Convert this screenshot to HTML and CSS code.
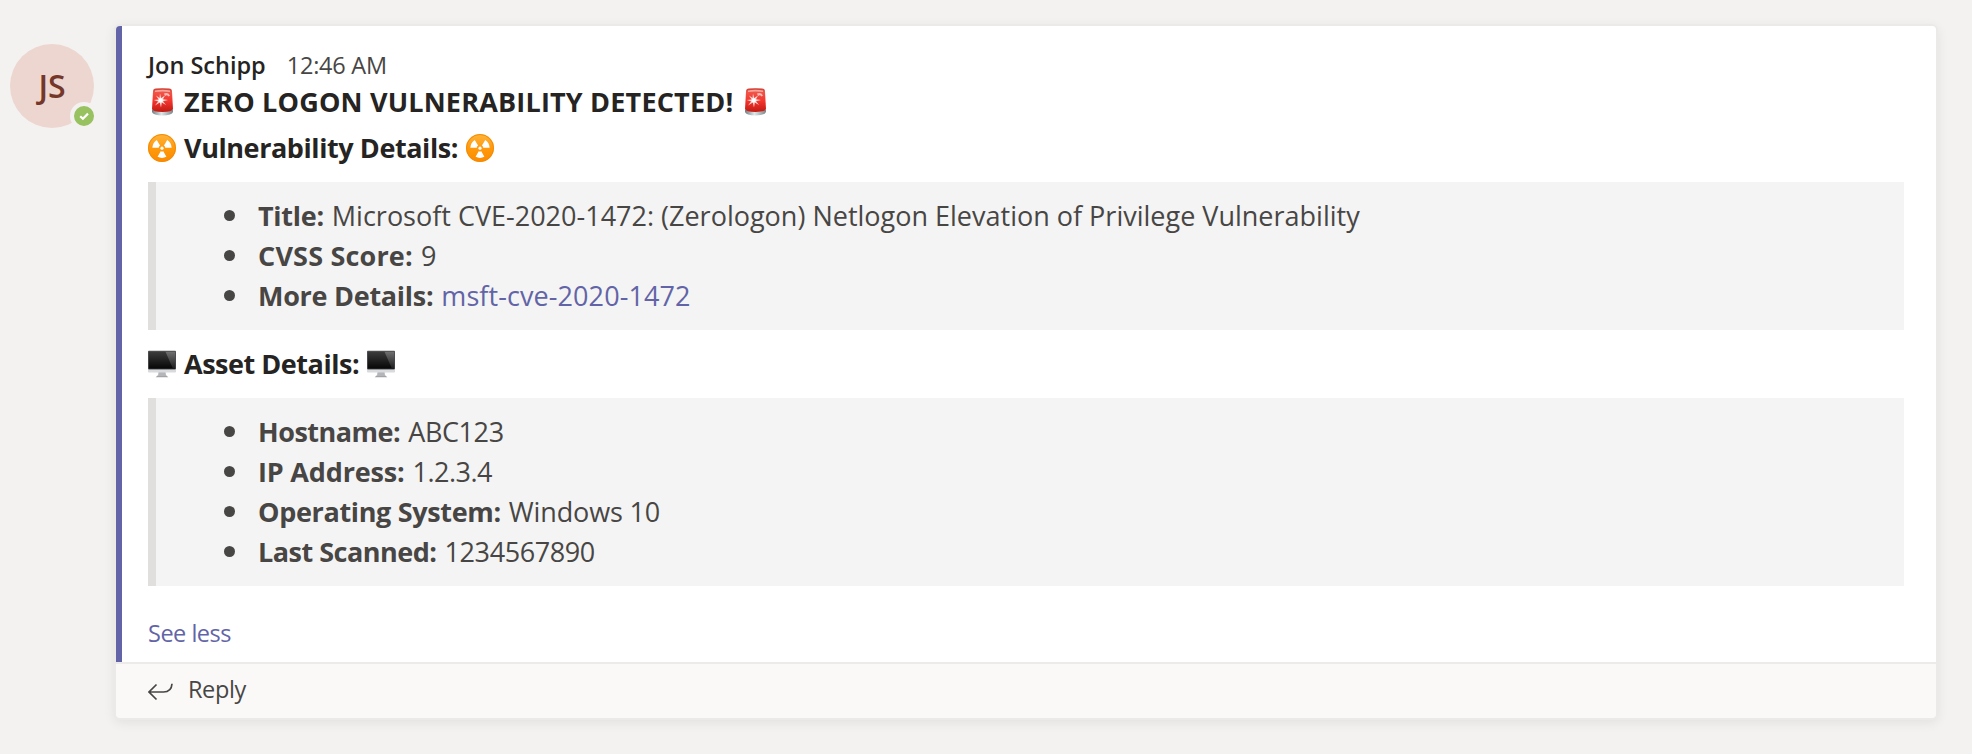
FILE: index.html
```html
<!DOCTYPE html>
<html lang="en">
<head>
<meta charset="utf-8">
<title>Conversation</title>
<link rel="stylesheet" href="styles.css">
</head>
<body>
<svg class="defs" width="0" height="0">
  <defs>
    <linearGradient id="red" x1="0" y1="0" x2="0" y2="1"><stop offset="0" stop-color="#c9382c"/><stop offset=".15" stop-color="#f0564a"/><stop offset=".55" stop-color="#f2352d"/><stop offset="1" stop-color="#c01a12"/></linearGradient>
    <linearGradient id="base" x1="0" y1="0" x2="1" y2="0"><stop offset="0" stop-color="#6f7c80"/><stop offset=".45" stop-color="#dfe6e8"/><stop offset="1" stop-color="#7b878b"/></linearGradient>
    <linearGradient id="orange" x1="0" y1="0" x2="0" y2="1"><stop offset="0" stop-color="#ffb43c"/><stop offset=".5" stop-color="#ff9a0c"/><stop offset="1" stop-color="#fb8a00"/></linearGradient>
    <linearGradient id="screen" x1="0" y1="0" x2="0" y2="1"><stop offset="0" stop-color="#3c3c3c"/><stop offset="1" stop-color="#060606"/></linearGradient>
    <linearGradient id="glare" x1="0" y1="0" x2="0" y2="1"><stop offset="0" stop-color="#707070"/><stop offset="1" stop-color="#1c1c1c"/></linearGradient>
    <symbol id="siren" viewBox="0 0 28 28">
      <path d="M4 21.5 L25 21.5 L25 24 Q24 27.4 14.5 27.4 Q5 27.4 4 24Z" fill="url(#base)"/>
      <path d="M5 3.4 Q5 .5 8 .4 Q14.500 -.1 21 .4 Q24 .5 24 3.400 L25 21 Q24 24 14.500 24 Q5 24 4 21Z" fill="url(#red)"/>
      <path d="M7 2.600 Q14.500 1 22 2.600 L22 4 Q14.500 3 7 4Z" fill="#f9a59c"/>
      <path d="M16 5.500 Q20 4 22 7.500 L20.500 8.500 Q19 6.500 17 8Z" fill="#ffd0ca" opacity=".85"/>
      <path d="M12 5.500 L13.200 10 L17 7.500 L15 11.300 L20 11.900 L15 13.200 L18 17 L13.800 14.500 L13 19.500 L11.800 14.500 L7 17.500 L10.200 13.400 L5.800 12 L10.600 11.400 L8 7.500 L11.500 10Z" fill="#ffd9d4"/>
      <circle cx="12.700" cy="12.400" r="2.100" fill="#fff"/>
    </symbol>
    <symbol id="radiation" viewBox="0 0 28 28">
      <circle cx="14" cy="14" r="14" fill="url(#orange)"/>
      <circle cx="14" cy="14" r="13.500" fill="none" stroke="#f28c0a" stroke-width="1"/>
      <g fill="#fff">
        <circle cx="14" cy="14.200" r="1.600"/>
        <path id="blade" d="M12.700 17.200 Q14 17.900 15.300 17.200 L18.400 22.800 Q14 25 9.600 22.800Z"/>
        <use href="#blade" transform="rotate(120 14 14.200)"/>
        <use href="#blade" transform="rotate(240 14 14.200)"/>
      </g>
    </symbol>
    <symbol id="monitor" viewBox="0 0 28 28">
      <g transform="translate(0 .8)">
        <path d="M10.500 21 H17.500 L18 25 H10Z" fill="#b4b5b9"/>
        <path d="M9.500 24.600 H18.500 L20.300 26.400 H7.700Z" fill="#a2a3a6"/>
        <rect x="0" y="17" width="28" height="4.700" rx=".8" fill="#d9dade"/>
        <rect x="0" y="0" width="28" height="18.600" rx=".8" fill="#505154"/>
        <rect x=".8" y=".9" width="26.400" height="17" fill="url(#screen)"/>
        <path d="M17.500 .9 H27.200 V17.900 H25Z" fill="url(#glare)"/>
      </g>
    </symbol>
  </defs>
</svg>
<main class="thread">
  <div class="avatar">JS
    <span class="presence"><svg viewBox="0 0 20 20"><path d="M6.200 10.200 L8.900 12.700 L14 7.600" fill="none" stroke="#fff" stroke-width="2.200"/></svg></span>
  </div>
  <article class="card">
    <section class="message">
      <header class="meta"><span class="author">Jon Schipp</span><time class="time">12:46 AM</time></header>
      <h1 class="heading alert"><svg class="emoji"><use href="#siren"/></svg><span>ZERO LOGON VULNERABILITY DETECTED!</span><svg class="emoji"><use href="#siren"/></svg></h1>
      <h2 class="heading"><svg class="emoji"><use href="#radiation"/></svg><span>Vulnerability Details:</span><svg class="emoji"><use href="#radiation"/></svg></h2>
      <ul class="quote">
        <li><b>Title:</b><span class="wide">Microsoft CVE-2020-1472: (Zerologon) Netlogon Elevation of Privilege Vulnerability</span></li>
        <li><b class="caps">CVSS Score:</b><span>9</span></li>
        <li><b>More Details:</b><a class="link wider">msft-cve-2020-1472</a></li>
      </ul>
      <h2 class="heading asset"><svg class="emoji"><use href="#monitor"/></svg><span>Asset Details:</span><svg class="emoji"><use href="#monitor"/></svg></h2>
      <ul class="quote">
        <li><b class="tight">Hostname:</b><span>ABC123</span></li>
        <li><b class="address">IP Address:</b><span class="tight">1.2.3.4</span></li>
        <li><b class="system">Operating System:</b><span class="windows">Windows 10</span></li>
        <li><b class="tight">Last Scanned:</b><span>1234567890</span></li>
      </ul>
      <a class="toggle link">See less</a>
    </section>
    <footer class="reply">
      <svg class="reply-icon" viewBox="0 0 26 18"><path d="M8.500 1.500 L1 9 L8.500 16.500 M1 9 H15.500 Q23.500 9 24 .8" fill="none" stroke="#484644" stroke-width="1.700"/></svg>
      <span>Reply</span>
    </footer>
  </article>
</main>
</body>
</html>
```
FILE: styles.css
```css
* { box-sizing: border-box; }
body {
  margin: 0;
  background: #f3f2f1;
  color: #484644;
  font-family: "Open Sans", "Noto Sans", sans-serif;
}
.defs { display: block; }
.thread {
  display: flex;
  align-items: flex-start;
  gap: 22px;
  height: 754px;
  padding: 26px 36px 36px 10px;
}
.avatar {
  position: relative;
  flex: none;
  width: 84px;
  height: 84px;
  margin-top: 18px;
  border-radius: 50%;
  background: #edd6cf;
  color: #74372a;
  font-size: 32px;
  font-weight: 600;
  line-height: 83px;
  text-align: center;
}
.presence {
  position: absolute;
  right: -4px;
  bottom: -2px;
  width: 28px;
  height: 28px;
  border: 4px solid #f3f2f1;
  border-radius: 50%;
  background: #98c160;
}
.presence svg { display: block; }
.card {
  flex: 1;
  border-radius: 4px;
  box-shadow: 0 0 0 2px #ebeae8, 0 3px 12px 2px rgba(0, 0, 0, .07);
}
.message {
  height: 636px;
  padding: 23px 32px 0 26px;
  border-left: 6px solid #6264a7;
  border-radius: 4px 4px 0 0;
  background: #fff;
}
.meta {
  display: flex;
  gap: 21px;
  height: 34px;
  font-size: 23.5px;
  line-height: 32px;
}
.author { color: #252423; font-weight: 600; letter-spacing: 0; }
.time { letter-spacing: -.25px; }
.heading {
  display: flex;
  align-items: center;
  gap: 8px;
  margin: 0 0 15px;
  height: 38px;
  color: #252423;
  font-size: 27px;
  font-weight: 700;
  line-height: 38px;
  letter-spacing: -.42px;
  white-space: nowrap;
}
.heading.alert { margin-bottom: 8px; letter-spacing: .19px; }
.heading.asset { margin-top: 15px; letter-spacing: -.47px; }
.emoji { flex: none; width: 28px; height: 28px; }
.quote {
  margin: 0;
  padding: 14px 0 14px 102px;
  border-left: 8px solid #e1dfdd;
  background: #f4f4f4;
  list-style: none;
  font-size: 27px;
  line-height: 40px;
  letter-spacing: -.4px;
}
.quote li {
  display: flex;
  align-items: center;
  gap: 8px;
  height: 40px;
  margin-left: -34px;
  white-space: nowrap;
}
.quote li::before {
  content: "";
  width: 11px;
  height: 11px;
  margin: 0 15px 2px 0;
  border-radius: 50%;
  background: #484644;
}
.quote b { letter-spacing: -.28px; }
.quote .caps { letter-spacing: .18px; }
.quote .address { letter-spacing: -.18px; }
.quote .system { letter-spacing: -.34px; }
.quote .tight { letter-spacing: -.5px; }
.quote .windows { letter-spacing: -.15px; }
.quote .wide { letter-spacing: 0; }
.quote .wider { letter-spacing: .08px; }
.link { color: #6264a7; }
.toggle {
  display: block;
  margin-top: 31px;
  font-size: 23.5px;
  line-height: 32px;
  letter-spacing: -.5px;
}
.reply {
  display: flex;
  align-items: center;
  gap: 14px;
  height: 56px;
  padding: 0 0 4px 32px;
  border-top: 2px solid #edebe9;
  border-radius: 0 0 4px 4px;
  background: #faf9f8;
  font-size: 23.5px;
  letter-spacing: -.4px;
}
.reply-icon { width: 26px; height: 18px; margin-top: 6px; }
```
